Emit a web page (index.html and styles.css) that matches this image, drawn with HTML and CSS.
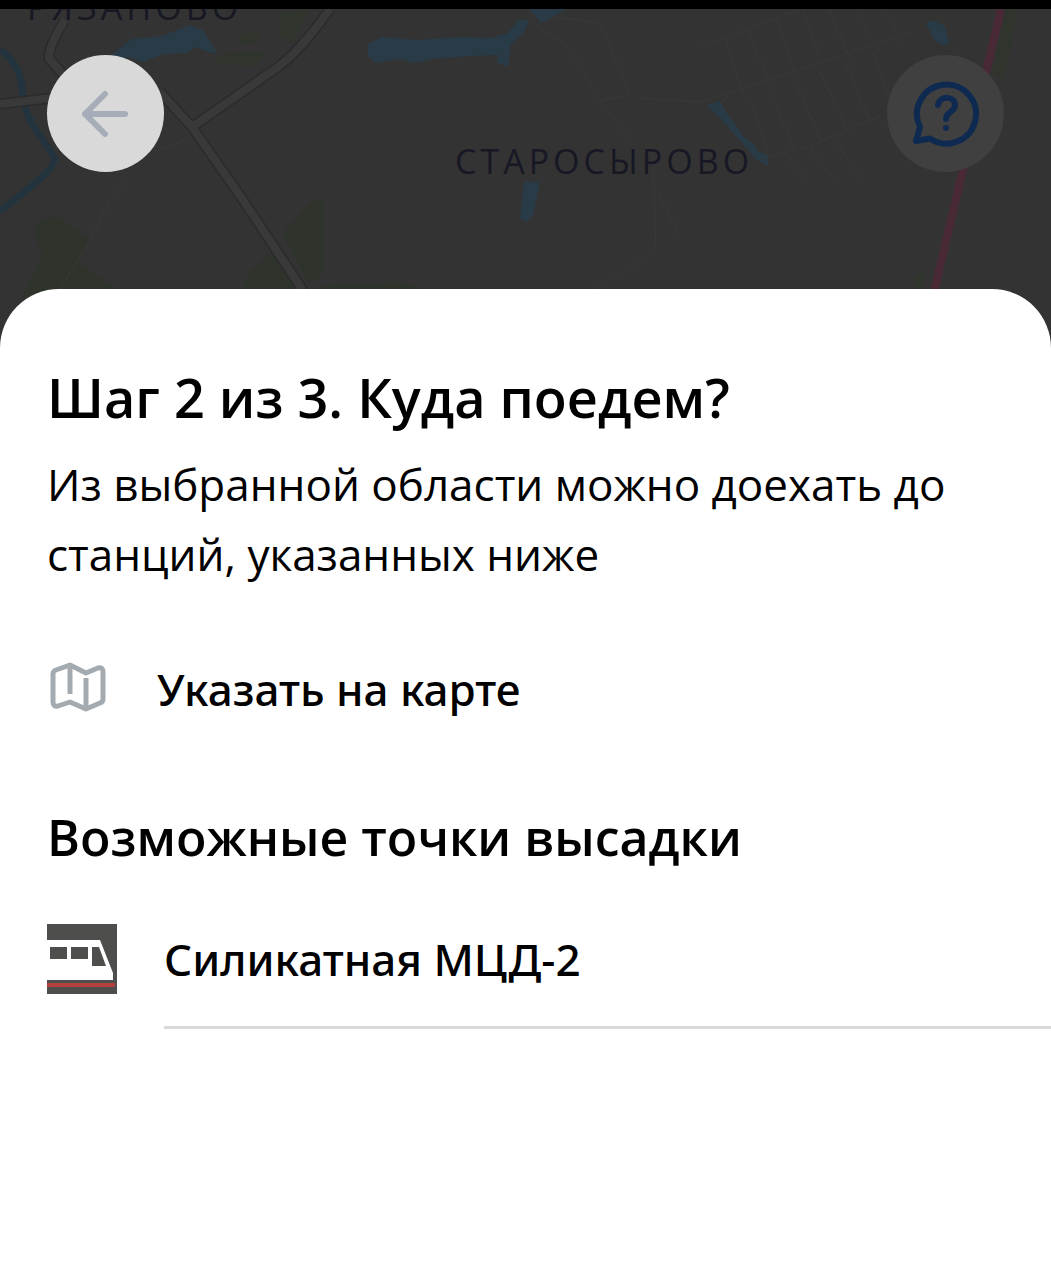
FILE: index.html
```html
<!DOCTYPE html>
<html lang="ru">
<head>
<meta charset="utf-8">
<meta name="viewport" content="width=device-width, initial-scale=1">
<title>Куда поедем?</title>
<link rel="stylesheet" href="styles.css">
</head>
<body>
<header class="map-header">
  <svg class="map" viewBox="0 0 1051 350" preserveAspectRatio="xMidYMin slice" aria-hidden="true">
    <rect width="1051" height="350" fill="#333333"/>
    <!-- woods -->
    <g fill="#2e342c">
      <path d="M35 235L36 222L57 216L89 238L79 262L115 289L20 300L43 256Z"/>
      <path d="M324 198V270L318 280L308 283L283 232L314 200Z"/>
      <path d="M272 252L294 289H244L248 274Z"/>
      <path d="M318 289L330 284L400 282L424 289Z"/>
      <path d="M278 12L309 9L292 44L280 35ZM239 35L255 32L262 41L242 44ZM212 64L223 54L270 52L255 66Z" opacity=".8"/>
      <path d="M1006 9H1018L1004 80L992 72ZM915 275L926 272L921 289H914Z" opacity=".8"/>
    </g>
    <!-- water -->
    <g fill="#293b47">
      <path d="M112 54L132 39L162 36L190 25L203 30L217 53L208 52L195 47L187 53L164 54L143 62L128 57L112 72Z"/>
      <path d="M368 44L382 37L418 40L460 37L490 38L508 33L518 20L529 20L524 32L511 44L508 67L496 62L500 55L470 56L432 59L415 63L399 59L376 63L368 56Z"/>
      <path d="M529 9H567L541 23Z"/>
      <path d="M524 181L540 183L533 215L527 222L520 219Z"/>
      <path d="M926 24L930 20L944 25L949 42L946 46L935 41Z"/>
      <path d="M707 105L720 101L726 112L745 138L755 145L758 152L768 155V166L757 160L743 144L728 127Z"/>
    </g>
    <path d="M0 50Q20 63 22 89C23 119 42 136 54 157Q58 165 28 189L0 211" fill="none" stroke="#23343f" stroke-width="7"/>
    <!-- roads -->
    <g fill="none" stroke="#2b2b2b">
      <path d="M65 20Q48 47 49 59L64 75M0 104L60 97M160 92L192 127L245 203L304 292M192 127L278 67Q300 51 330 9" stroke-width="11"/>
    </g>
    <g fill="none" stroke="#393939">
      <path d="M65 20Q48 47 49 59L64 75M0 104L60 97M160 92L192 127L245 203L304 292M192 127L278 67Q300 51 330 9" stroke-width="8"/>
    </g>
    <g fill="none" stroke="#393939" stroke-width="1">
      <path d="M130 176L108 203L94 233L60 289M155 152L190 138M529 21L563 43L580 66L600 101L633 142M600 101L630 95L600 23L555 17M640 98L700 102L730 93L910 32M653 152L656 252L595 289M650 178L681 238"/>
      <path d="M700 48L800 9M720 104L730 93M760 160L812 145L880 116M726 42L744 98M748 30L770 84M775 18L797 75M803 12L824 66M829 10L850 59M855 9L878 51M883 9L905 45M750 101L770 157M770 92L795 151M796 84L821 141M820 72L848 130M846 64L870 122M872 53L893 105M785 154L808 183M810 148L836 182M835 139L861 180"/>
    </g>
    <path d="M1001 9L934 292" stroke="#4a2936" stroke-width="8"/>
    <g class="map-labels">
      <text x="27" y="20">РЯЗАНОВО</text>
      <text x="455" y="174">СТАРОСЫРОВО</text>
    </g>
  </svg>
  <button class="round-button back" type="button" aria-label="Назад">
    <svg viewBox="0 0 48 48" width="48" height="48" fill="none" stroke="#a6adb8" stroke-width="6" stroke-linecap="round" stroke-linejoin="round" aria-hidden="true">
      <path d="M23 4L3 24L23 44M3 24H43"/>
    </svg>
  </button>
  <button class="round-button help" type="button" aria-label="Помощь">
    <svg viewBox="0 0 68 68" width="68" height="68" fill="none" stroke="#0f2a51" stroke-width="6" stroke-linecap="round" stroke-linejoin="round" aria-hidden="true">
      <path d="M8 47A29.500 29.500 0 1 1 18 58.500L4 61Z"/>
      <path d="M26 25C28 15 43 16 43 25C43 33 34 31 34 39"/>
      <circle cx="34" cy="48" r="3" fill="#0f2a51" stroke="none"/>
    </svg>
  </button>
</header>
<main class="sheet">
  <h1 class="title">Шаг 2 из 3. Куда поедем?</h1>
  <p class="lead">Из выбранной области можно доехать до станций, указанных ниже</p>
  <button class="pick-on-map" type="button">
    <svg viewBox="0 3 62 56" width="62" height="56" fill="none" stroke="#a3abb1" stroke-width="5" stroke-linejoin="round" aria-hidden="true">
      <path d="M6 16Q6 13 9 12L23 7L39 15L51 10Q56 9 56 14V41Q56 44 53 45L39 51L23 44L11 48Q6 49 6 44Z"/>
      <path d="M23 7V36M39 20V51"/>
    </svg>
    <span>Указать на карте</span>
  </button>
  <h2 class="subtitle">Возможные точки высадки</h2>
  <ul class="stops">
    <li>
      <button class="stop" type="button">
        <svg viewBox="0 0 70 70" width="70" height="70" aria-hidden="true">
          <rect width="70" height="70" fill="#4e4e4c"/>
          <path d="M0 16H53L66 49V56H0Z" fill="#fff"/>
          <path d="M3 23H20V35H3ZM24 23H41V35H24ZM45 23H52L59 42H45Z" fill="#4e4e4c"/>
          <rect y="59" width="68" height="4" fill="#b5403f"/>
        </svg>
        <span class="stop-name">Силикатная МЦД-2</span>
      </button>
    </li>
  </ul>
</main>
</body>
</html>
```
FILE: styles.css
```css
* {
  box-sizing: border-box;
}

body {
  margin: 0;
  min-height: 100vh;
  display: flex;
  flex-direction: column;
  background: #333;
  color: #000;
  font-family: "Open Sans", "Noto Sans", sans-serif;
}

button {
  border: 0;
  padding: 0;
  background: none;
  color: inherit;
  font: inherit;
  text-align: left;
  cursor: pointer;
}

svg {
  display: block;
  flex: none;
}

.map-header {
  position: relative;
  display: flex;
  justify-content: space-between;
  padding: 46px 47px 176px;
  border-top: 9px solid #000;
}

.map {
  position: absolute;
  top: -9px;
  left: 0;
  width: 100%;
  height: 350px;
  clip-path: inset(9px 0 0);
}

.map-labels {
  fill: #171824;
  font-family: "Open Sans", "Noto Sans", sans-serif;
  font-size: 34px;
  letter-spacing: 4px;
}

.round-button {
  position: relative;
  display: grid;
  place-items: center;
  width: 117px;
  height: 117px;
  border-radius: 50%;
}

.back {
  background: #d9d9d9;
}

.help {
  background: #404040;
}

.sheet {
  position: relative;
  flex: 1;
  margin-top: -59px;
  padding: 68px 0 48px 47px;
  border-radius: 59px 59px 0 0;
  background: #fff;
}

.title {
  margin: 0;
  font-size: 54px;
  line-height: 80px;
  font-weight: 600;
}

.lead {
  margin: 12px 48px 0 0;
  font-size: 44px;
  line-height: 70px;
}

.pick-on-map {
  display: flex;
  align-items: center;
  gap: 48px;
  margin-top: 68px;
  font-family: "Noto Sans", "Open Sans", sans-serif;
  font-size: 44px;
  line-height: 64px;
  font-weight: 500;
}

.subtitle {
  margin: 80px 0 0;
  font-size: 50px;
  line-height: 72px;
  font-weight: 600;
}

.stops {
  margin: 51px 0 0;
  padding: 0;
  list-style: none;
}

.stop {
  display: flex;
  gap: 47px;
  width: 100%;
}

.stop-name {
  flex: 1;
  padding-bottom: 32px;
  border-bottom: 3px solid #d9d9db;
  font-family: "Noto Sans", "Open Sans", sans-serif;
  font-size: 44px;
  line-height: 70px;
  font-weight: 500;
}
```
